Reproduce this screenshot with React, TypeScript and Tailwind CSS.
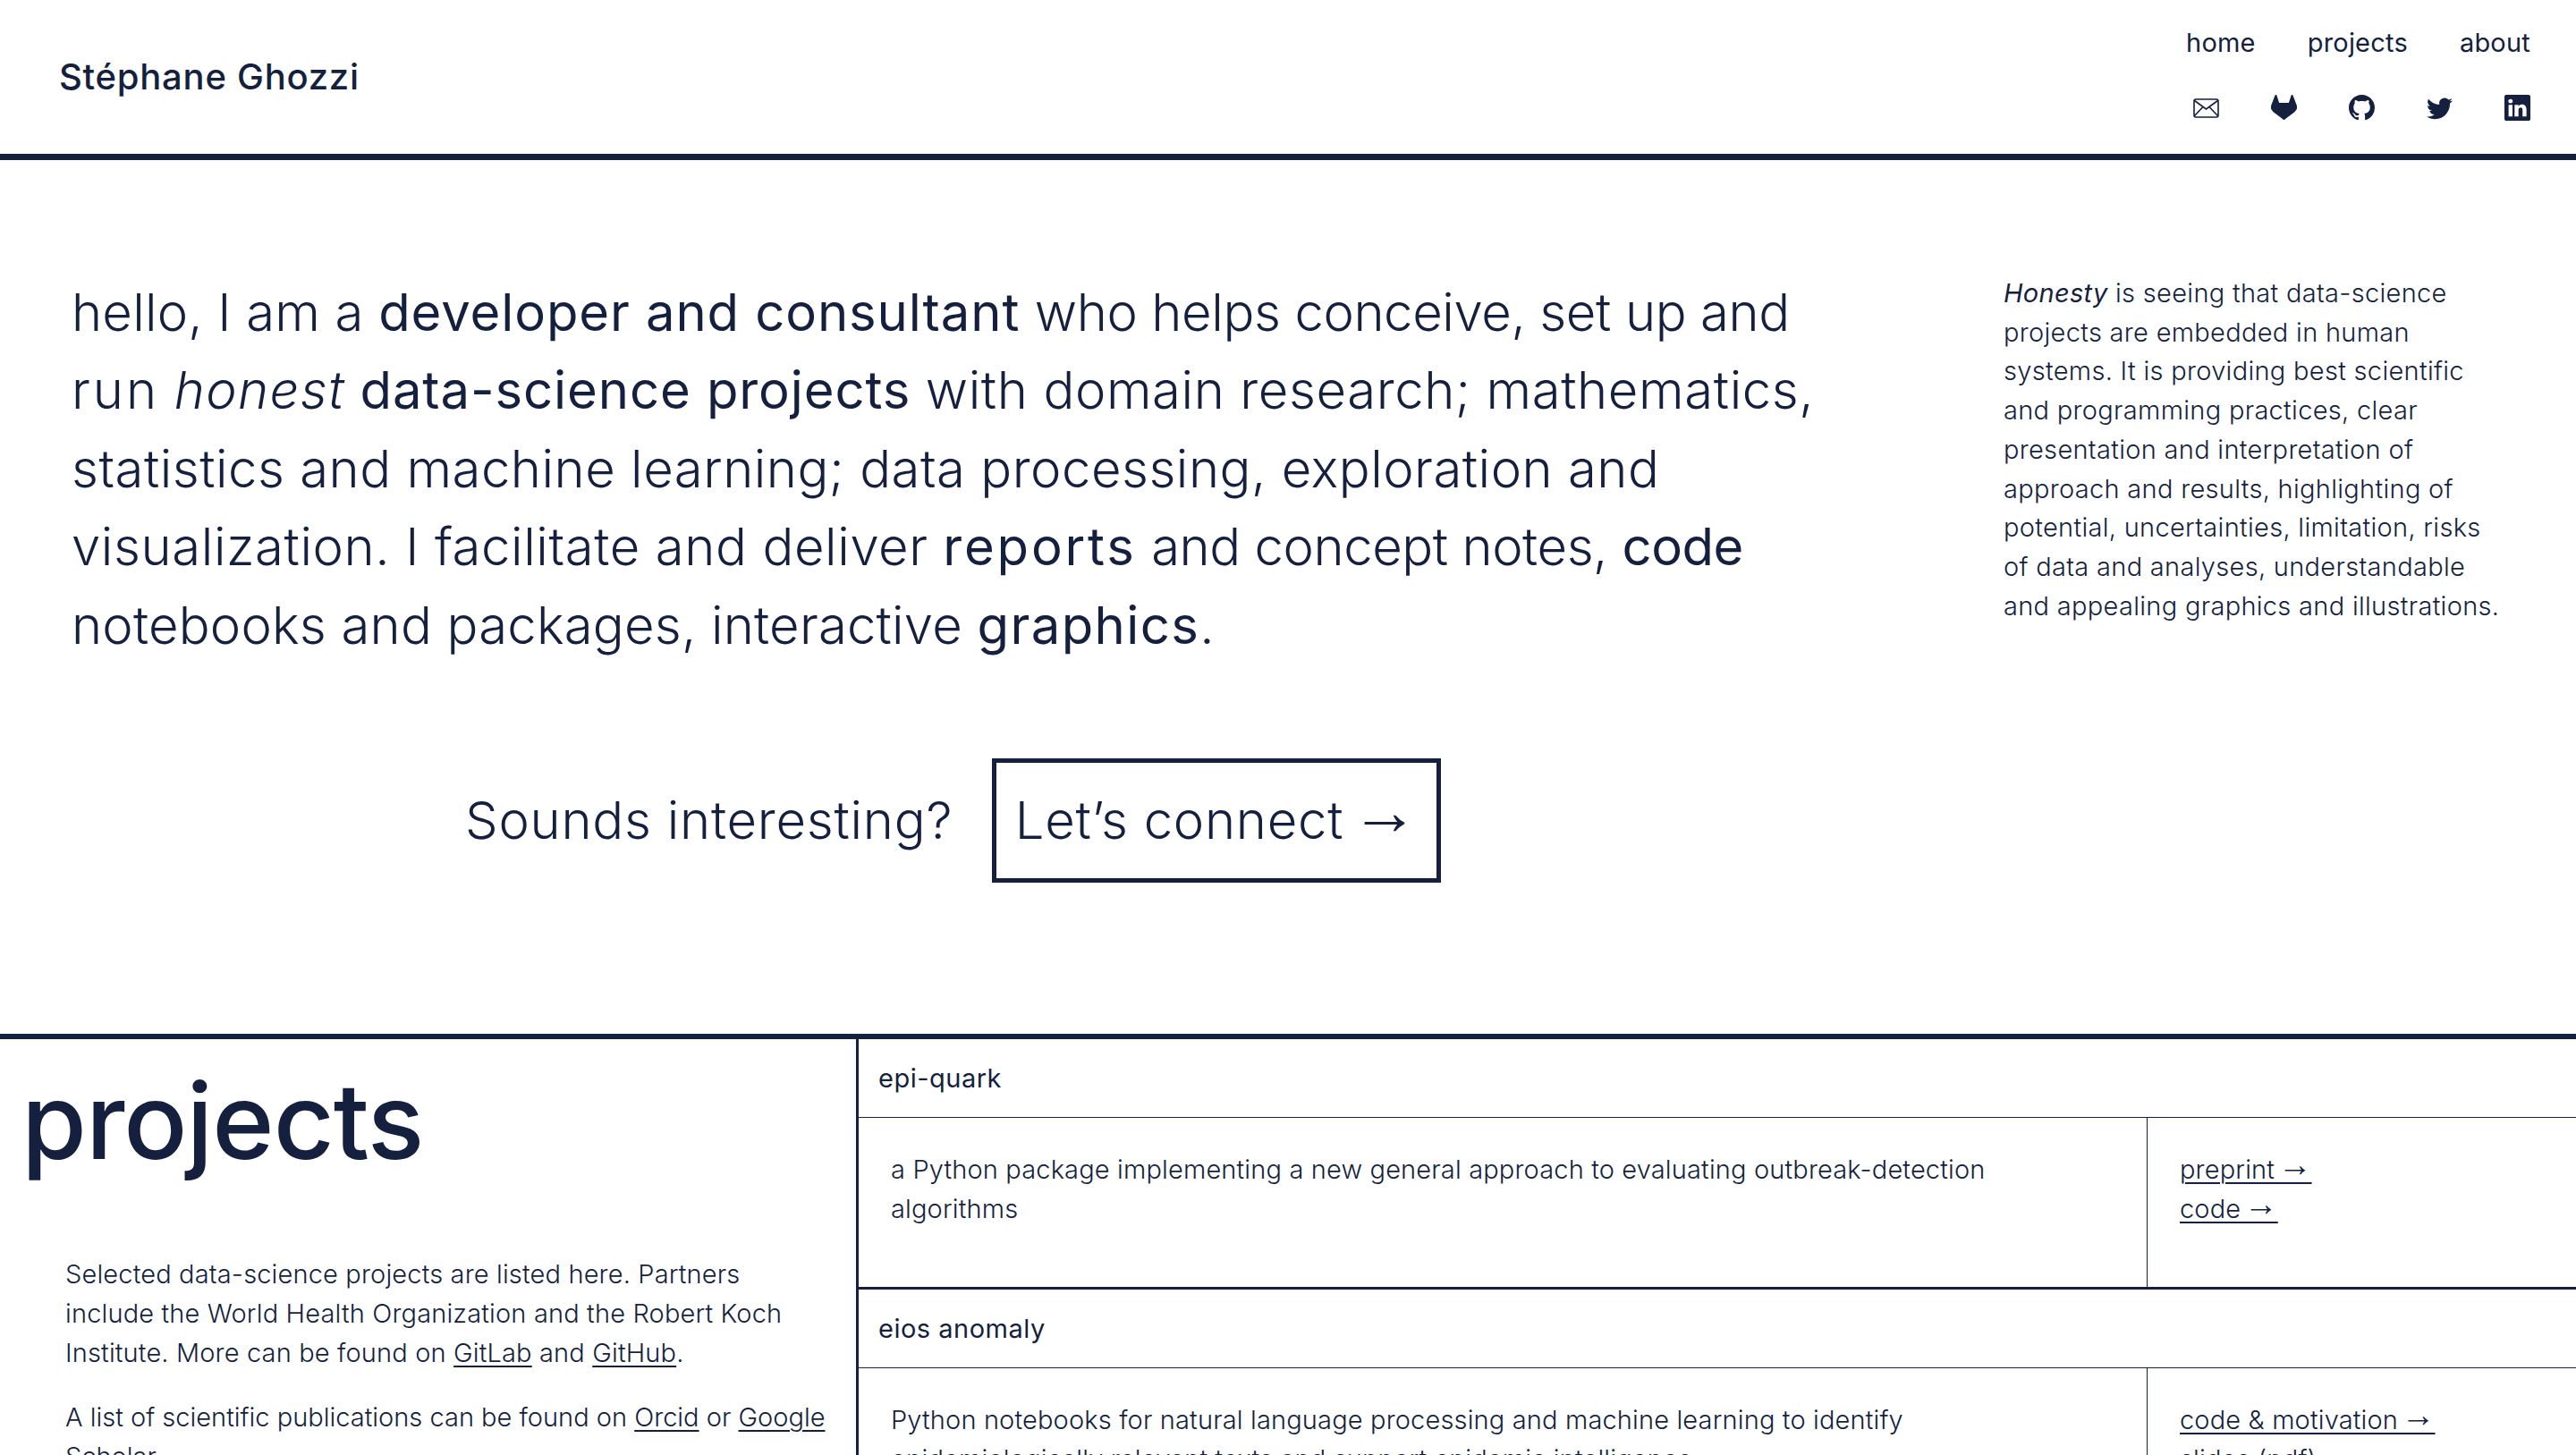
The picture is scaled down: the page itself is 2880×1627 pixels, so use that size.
import React from 'react';
import { BsGithub, BsGitlab, BsLinkedin, BsTwitter } from 'react-icons/bs';

const EnvelopeIcon: React.FC = () => (
    <svg viewBox="0 0 29 22" className="w-[29px] h-[22px]" fill="none" stroke="currentColor" strokeWidth="1.6">
        <rect x="1" y="1" width="27" height="20" rx="2" />
        <path d="M1.5 2.5 14.5 12 27.5 2.5M1.5 19.5 11 9.5M27.5 19.5 18 9.5" />
    </svg>
);

const Link: React.FC<{ children: React.ReactNode }> = ({ children }) => (
    <a className="underline underline-offset-[4px] decoration-[1.5px]">{children}</a>
);

const Arrow: React.FC = () => (
    <span className="font-['Liberation_Sans',sans-serif] text-[1.3em] leading-[0] tracking-normal align-[0.07em] ml-[-0.12em]">→</span>
);

const projects = [
    {
        name: 'epi-quark',
        text: ['a Python package implementing a new general approach to evaluating outbreak-detection', 'algorithms'],
        links: [<>preprint <Arrow /></>, <>code <Arrow /></>],
    },
    {
        name: 'eios anomaly',
        text: ['Python notebooks for natural language processing and machine learning to identify', 'epidemiologically relevant texts and support epidemic intelligence'],
        links: [<>code &amp; motivation <Arrow /></>, <>slides (pdf)</>],
    },
];

const App: React.FC = () => {
    return (
        <div className="h-screen overflow-hidden bg-white text-[#151f3e] font-['Inter',sans-serif] font-light">
            <header className="flex justify-between items-center h-[179px] border-b-[7px] border-[#151f3e] pl-[66px] pr-[51px]">
                <div className="text-[40px] font-medium tracking-[0.75px]">Stéphane Ghozzi</div>
                <div className="flex flex-col items-end gap-[36px] pb-[11px]">
                    <nav className="flex gap-[58px] text-[29px] leading-[44px] font-normal tracking-[0.2px]">
                        <a>home</a>
                        <a>projects</a>
                        <a>about</a>
                    </nav>
                    <div className="flex items-center gap-[58px] text-[29px] h-[30px]">
                        <EnvelopeIcon />
                        <BsGitlab />
                        <BsGithub />
                        <BsTwitter />
                        <BsLinkedin />
                    </div>
                </div>
            </header>

            <section className="pt-[127px] pb-[169px]">
                <div className="flex justify-between pl-[80px] pr-[44px]">
                    <p className="text-[58px] leading-[87.4px] whitespace-nowrap tracking-[0.2px]">
                        hello, I am a <span className="font-normal tracking-[0.9px]">developer and consultant</span> <span className="tracking-[-0.4px]">who helps conceive, set up and</span><br />
                        <span className="tracking-[3px]">run</span> <em className="tracking-[1.4px]">honest</em> <span className="font-normal tracking-[0.9px]">data-science projects</span> <span className="tracking-[0.6px]">with domain research; mathematics,</span><br />
                        <span className="tracking-[0.5px]">statistics and machine learning; data processing, exploration and</span><br />
                        <span className="tracking-[0.6px]">visualization. I facilitate and deliver</span> <span className="font-normal tracking-[2.8px]">reports</span> <span className="tracking-[-0.45px]">and concept notes,</span> <span className="font-normal tracking-[-0.5px]">code</span><br />
                        notebooks and packages, interactive <span className="font-normal tracking-[1.4px]">graphics</span>.
                    </p>
                    <p className="w-[596px] text-[29px] leading-[43.7px] whitespace-nowrap tracking-[0.3px]">
                        <em className="font-normal">Honesty</em> is seeing that data-science<br />
                        projects are embedded in human<br />
                        systems. It is providing best scientific<br />
                        and programming practices, clear<br />
                        presentation and interpretation of<br />
                        approach and results, highlighting of<br />
                        potential, uncertainties, limitation, risks<br />
                        of data and analyses, understandable<br />
                        and appealing graphics and illustrations.
                    </p>
                </div>
                <div className="flex items-center mt-[105px] pl-[520px] gap-[44px] text-[58px] tracking-[0.75px]">
                    <span>Sounds interesting?</span>
                    <a className="flex items-center justify-center w-[502px] h-[139px] border-[5px] border-[#151f3e]">
                        <span className="whitespace-pre">Let’s connect <Arrow /></span>
                    </a>
                </div>
            </section>

            <section className="flex border-t-[6px] border-[#151f3e]">
                <div className="w-[960px] shrink-0 border-r-[3px] border-[#151f3e]">
                    <h1 className="pl-[24px] pt-[31px] text-[118px] leading-[120px] font-medium tracking-[-1px]">projects</h1>
                    <div className="pl-[73px] pr-[10px] pt-[90px] text-[29px] leading-[44px] tracking-[0.15px]">
                        <p className="whitespace-nowrap">
                            Selected data-science projects are listed here. Partners<br />
                            include the World Health Organization and the Robert Koch<br />
                            Institute. More can be found on <Link>GitLab</Link> and <Link>GitHub</Link>.
                        </p>
                        <p className="mt-[28px] tracking-normal">
                            A list of scientific publications can be found on <Link>Orcid</Link> or <Link>Google Scholar</Link>.
                        </p>
                    </div>
                </div>
                <div className="flex-1 min-w-0">
                    {projects.map(project => (
                        <div key={project.name} className="border-b-[3px] border-[#151f3e]">
                            <div className="flex items-center h-[88px] pl-[22px] border-b-[1px] border-[#151f3e] text-[29px] font-normal tracking-[0.5px]">
                                {project.name}
                            </div>
                            <div className="flex h-[189px] text-[29px] leading-[44px] tracking-[0.15px]">
                                <div className="w-[1441px] shrink-0 pl-[36px] pt-[36px] border-r-[1px] border-[#151f3e] whitespace-nowrap">
                                    {project.text.map(line => <div key={line}>{line}</div>)}
                                </div>
                                <div className="pl-[36px] pt-[36px]">
                                    {project.links.map((link, i) => <div key={i}><Link>{link}</Link></div>)}
                                </div>
                            </div>
                        </div>
                    ))}
                </div>
            </section>
        </div>
    );
};

export default App;
